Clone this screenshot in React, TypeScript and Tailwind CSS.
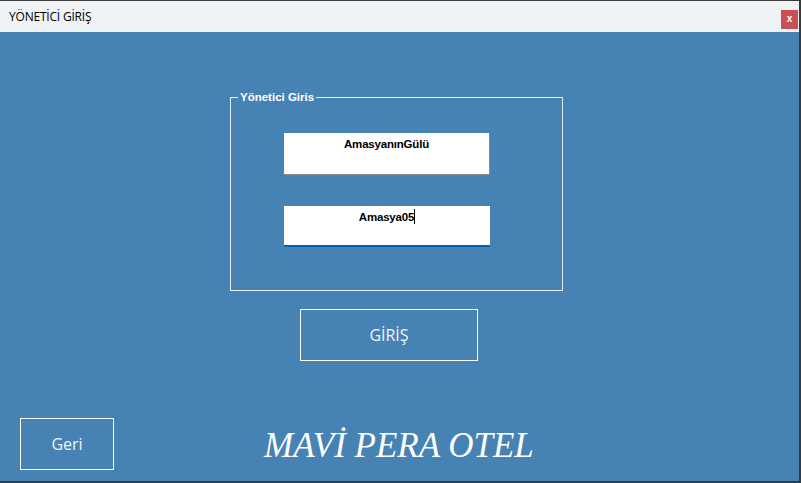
import React from 'react';

const sans = "font-['Liberation_Sans',Arial,sans-serif]";
const ui = "font-['Open_Sans','Noto_Sans',sans-serif]";

export default function App() {
  return (
    <div className="w-[801px] h-[483px] bg-[#4682b4] border-t border-r-2 border-b-2 border-[#3a3a3a] flex flex-col overflow-hidden">
      {/* Title bar */}
      <div className="h-[31px] bg-[#f0f3f6] flex items-center justify-between pl-[9px] pr-[1px] shrink-0">
        <span className={`${ui} text-[12px] text-black tracking-[-0.2px]`}>YÖNETİCİ GİRİŞ</span>
        <div className="w-[17px] h-[19px] mt-[5px] bg-[#c75050] flex items-center justify-center">
          <span className={`${sans} text-[10px] font-bold text-white leading-none`}>x</span>
        </div>
      </div>

      {/* Form body */}
      <div className="flex-1 flex flex-col">
        <div className="relative ml-[230px] mt-[65px] w-[333px] h-[194px] border border-[#e6eef5]">
          <span className={`absolute left-[7px] -top-[8px] px-[2px] bg-[#4682b4] text-white text-[11.5px] font-bold leading-[14px] ${sans}`}>
            Yönetici Giris
          </span>
          <div className="ml-[53px] mt-[35px] flex flex-col gap-[31px]">
            <div className="w-[206px] h-[42px] bg-white border-r border-b border-[#8a8a8a] flex items-start justify-center pt-[4px]">
              <span className={`${sans} text-[11.5px] font-bold text-black leading-[14px] tracking-[-0.2px]`}>AmasyanınGülü</span>
            </div>
            <div className="w-[206px] h-[41px] bg-white border-b-2 border-[#0063b1] flex items-start justify-center pt-[3px]">
              <span className={`${sans} text-[11.5px] font-bold text-black leading-[14px] tracking-[-0.2px] flex items-center`}>
                Amasya05<span className="inline-block w-[1px] h-[15px] bg-black" />
              </span>
            </div>
          </div>
        </div>

        <button className="ml-[300px] mt-[18px] w-[178px] h-[52px] border border-white flex items-center justify-center">
          <span className={`${ui} text-[16px] text-[#f4f4f4]`}>GİRİŞ</span>
        </button>

        <div className="flex items-center mt-[57px]">
          <button className="ml-[20px] w-[94px] h-[52px] border border-white flex items-center justify-center">
            <span className={`${ui} text-[16px] text-[#f4f4f4]`}>Geri</span>
          </button>
          <span className="ml-[150px] mt-[2px] font-['Liberation_Serif','Times_New_Roman',serif] italic text-[35px] text-white leading-none">
            MAVİ PERA OTEL
          </span>
        </div>
      </div>
    </div>
  );
}
